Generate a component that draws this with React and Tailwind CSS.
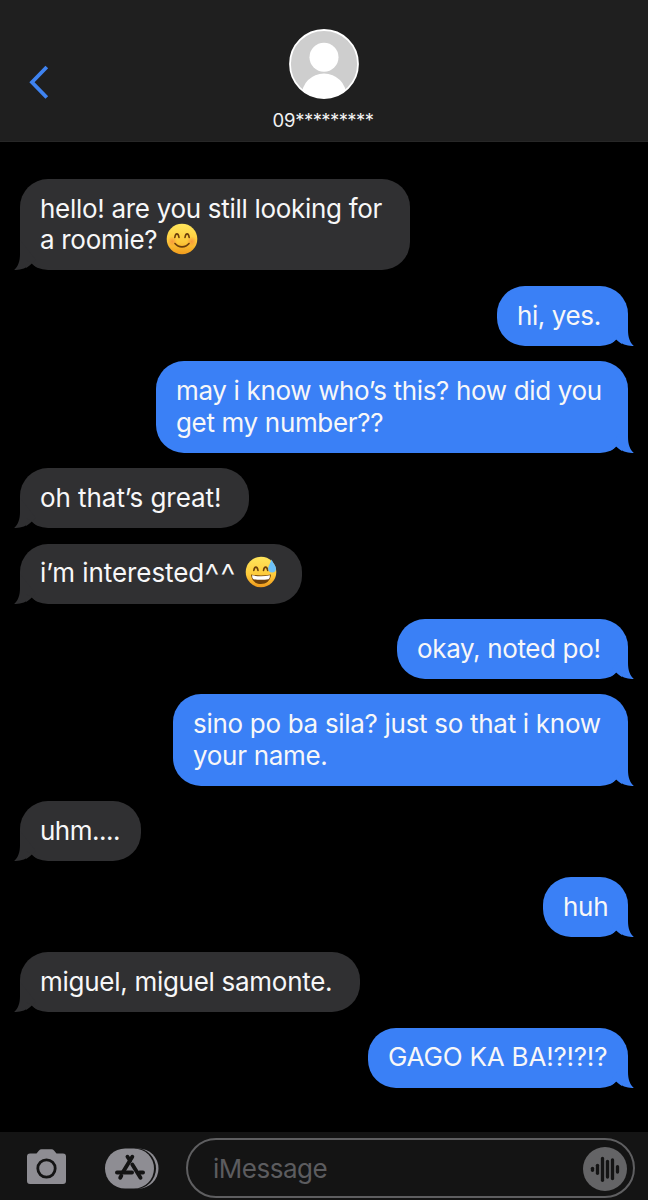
import React from 'react';

const messages = [
  { side: 'left', lines: ['hello! are you still looking for', 'a roomie?'], emoji: 'smile', size: 'w-[390px] tracking-[-0.3px]' },
  { side: 'right', lines: ['hi, yes.'], size: 'w-[131px] tracking-[-0.4px]' },
  { side: 'right', lines: ['may i know who’s this? how did you', 'get my number??'], size: 'w-[472px] tracking-[-0.34px]' },
  { side: 'left', lines: ['oh that’s great!'], size: 'w-[229px] tracking-[-0.06px]' },
  { side: 'left', lines: ['i’m interested'], carets: '^^', emoji: 'sweat', size: 'w-[282px] tracking-[-0.08px]' },
  { side: 'right', lines: ['okay, noted po!'], size: 'w-[231px] tracking-[-0.36px]' },
  { side: 'right', lines: ['sino po ba sila? just so that i know', 'your name.'], size: 'w-[455px] tracking-[-0.3px]' },
  { side: 'left', lines: ['uhm....'], size: 'w-[121px] tracking-[-0.5px]' },
  { side: 'right', lines: ['huh'], size: 'w-[85px] tracking-[-0.3px]' },
  { side: 'left', lines: ['miguel, miguel samonte.'], size: 'w-[340px] tracking-[-0.28px]' },
  { side: 'right', lines: ['GAGO KA BA!?!?!?'], size: 'w-[260px] tracking-[-0.2px]' },
];

const Emoji = ({ kind }) => (
  <svg viewBox="0 0 32 32" className="w-8 h-8 -mt-0.5 shrink-0" role="img" aria-label={kind}>
    <defs>
      <linearGradient id="face" x1="0" y1="0" x2="0" y2="1">
        <stop offset="0" stopColor="#ffe65c" />
        <stop offset="0.6" stopColor="#fdc93a" />
        <stop offset="1" stopColor="#f09a1c" />
      </linearGradient>
      <radialGradient id="blush">
        <stop offset="0" stopColor="#f4703a" stopOpacity="0.55" />
        <stop offset="1" stopColor="#f4703a" stopOpacity="0" />
      </radialGradient>
    </defs>
    <circle cx="16" cy="16" r="15.3" fill="url(#face)" />
    {kind === 'smile' ? (
      <>
        <circle cx="6.3" cy="18.5" r="5" fill="url(#blush)" />
        <circle cx="25.7" cy="18.5" r="5" fill="url(#blush)" />
        <g fill="none" stroke="#6b3f0c" strokeWidth="1.6" strokeLinecap="round">
          <path d="M8.8 14.5C9.5 9.7 12.3 9.7 13 14.5" />
          <path d="M19 14.5C19.7 9.7 22.5 9.7 23.2 14.5" />
          <path d="M9 20.5C12.5 25 19.5 25 23 20.5" />
        </g>
      </>
    ) : (
      <>
        <g fill="none" stroke="#6b3f0c" strokeWidth="1.6" strokeLinecap="round">
          <path d="M8.8 14.5C9.5 10 12.3 10 13 14.5" />
          <path d="M18.5 14.5C19.2 10 22 10 22.7 14.5" />
        </g>
        <path d="M6 18.5Q16 20.5 26 18.5C25.5 25 21 28 16 28S6.5 25 6 18.5Z" fill="#6b3f0c" />
        <path d="M7 19.3Q16 21 25 19.3Q25 22.6 23.5 23.2Q16 24.5 8.5 23.2Q7 22.6 7 19.3Z" fill="#fff" />
        <path d="M26.5 3.5C28 7 31 10 31 12.5A3.9 3.9 0 0 1 23.2 12.5C23.2 10 25.5 7 26.5 3.5Z" fill="#6cc0f7" />
      </>
    )}
  </svg>
);

const Tail = ({ side }) => (
  <svg
    viewBox="0 0 28 31"
    className={
      side === 'left'
        ? 'absolute -left-1.5 -bottom-px w-7 h-[31px] fill-[#303032]'
        : 'absolute -right-1.5 -bottom-px w-7 h-[31px] fill-[#3a80f6] -scale-x-100'
    }
  >
    <path d="M6 0V14C6 21 4.2 26.6 0.2 29.9C6 30.3 12 28.8 17.7 23.6L22 20Z" />
    {/* notch between the tail and the bubble's bottom edge */}
    <path d="M17.7 23.4C20.5 26 23 28.9 27.5 30.1V31H12V27.6C14 26.6 16 25.2 17.7 23.4Z" fill="#000" />
    <path d="M12 20V27.9C14 26.8 16 25.4 17.7 23.6Z" />
  </svg>
);

const Bubble = ({ side, lines, carets, emoji, size }) => (
  <div className={side === 'left' ? 'flex justify-start pl-5' : 'flex justify-end pr-5'}>
    <div
      className={`relative rounded-[28px] pl-5 pt-[13.8px] pb-[14.7px] text-[26px] leading-[31.5px] whitespace-nowrap text-[#f7f7f8] ${
        side === 'left' ? 'bg-[#303032]' : 'bg-[#3a80f6]'
      } ${size}`}
    >
      <Tail side={side} />
      {lines.map((line, i) => (
        <p key={line} className="relative flex items-center h-[31.5px]">
          <span>{line}</span>
          {carets && <span className="text-[34px] font-light tracking-[0.8px] mt-[5px]">{carets}</span>}
          {emoji && i === lines.length - 1 && (
            <span className="ml-[9px]">
              <Emoji kind={emoji} />
            </span>
          )}
        </p>
      ))}
    </div>
  </div>
);

const Header = () => (
  <header className="grid grid-cols-3 h-[142px] bg-[#1f1f1f] border-b border-[#272727]">
    <div className="pl-[29px] pt-[65px]">
      <svg viewBox="0 0 20 34" className="w-5 h-[34px]" fill="none" stroke="#3f83f0" strokeWidth="3.8">
        <path d="M17.8 2L3 17.3L17.8 32.5" />
      </svg>
    </div>
    <div className="flex flex-col items-center pt-[29px]">
      <svg viewBox="0 0 70 70" className="w-[70px] h-[70px]">
        <defs>
          <clipPath id="avatar">
            <circle cx="35" cy="35" r="34" />
          </clipPath>
        </defs>
        <circle cx="35" cy="35" r="34" fill="#cecece" />
        <g clipPath="url(#avatar)" fill="#fff">
          <circle cx="35" cy="28.3" r="14.5" />
          <ellipse cx="35" cy="67" rx="22.5" ry="22.5" />
        </g>
        <circle cx="35" cy="35" r="34" fill="none" stroke="#fff" strokeWidth="1.8" />
      </svg>
      <p className="mt-[9px] -ml-0.5 text-[18.5px] leading-6 tracking-[-0.6px] text-[#f2f2f2] whitespace-nowrap">
        <span className="tracking-[-0.2px]">09</span>*********
      </p>
    </div>
  </header>
);

const InputBar = () => (
  <footer className="flex items-start h-[68px] bg-[#141414] pl-[27px] pr-[14px]">
    <svg viewBox="0 0 39 36" className="w-[39px] h-9 mt-[17px]">
      <path
        d="M3 4.5H9.5L12 1.5Q13 0.3 14.5 0.3H24.5Q26 0.3 27 1.5L29.5 4.5H36Q39 4.5 39 7.5V32Q39 35 36 35H3Q0 35 0 32V7.5Q0 4.5 3 4.5Z"
        fill="#8e8d93"
      />
      <circle cx="19.5" cy="19.5" r="8.7" fill="none" stroke="#141414" strokeWidth="2.8" />
    </svg>
    <svg viewBox="0 0 54 42" className="w-[54px] h-[42px] mt-4 ml-[39px]">
      <rect x="7" y="0.5" width="46.5" height="40" rx="20" fill="#8e8d93" />
      <rect x="0" y="0" width="51" height="41" rx="20.5" fill="#141414" />
      <rect x="0" y="0.5" width="49" height="40" rx="20" fill="#8e8d93" />
      <g fill="none" stroke="#141414" strokeWidth="3.9" strokeLinecap="round">
        <path d="M22.5 8.7L25 12.5" />
        <path d="M27.3 8.7L18 24" />
        <path d="M27.3 16.5L35.5 29.8" />
        <path d="M12 24.5H27" />
        <path d="M34.5 24.5H38" />
        <path d="M16.3 27.8L15.2 29.8" />
      </g>
    </svg>
    <div className="flex items-center justify-between flex-1 h-[60px] mt-[6px] ml-[27px] -mr-px pl-[25px] pr-[6px] border-2 border-[#5f5f61] rounded-full">
      <span className="mt-0.5 text-[26px] leading-8 tracking-[-0.5px] text-[#5c5c5f]">iMessage</span>
      <svg viewBox="0 0 44 44" className="w-11 h-11 mt-px">
        <circle cx="22" cy="22" r="22" fill="#646466" />
        <g stroke="#141414" strokeWidth="3.3" strokeLinecap="round">
          <path d="M9.5 21.3V23.3" />
          <path d="M14.5 18.3V26.3" />
          <path d="M19.5 11.5V33.3" />
          <path d="M24.5 14.5V30" />
          <path d="M29.5 13V31.5" />
          <path d="M34.5 19.7V25" />
        </g>
      </svg>
    </div>
  </footer>
);

const App = () => {
  return (
    <div className="flex flex-col w-[648px] h-[1200px] overflow-hidden bg-black font-['Inter','Liberation_Sans',sans-serif]">
      <Header />
      <main className="flex flex-col flex-1 gap-[15.43px] pt-[37px]">
        {messages.map((message) => (
          <Bubble key={message.lines[0]} {...message} />
        ))}
      </main>
      <InputBar />
    </div>
  );
};

export default App;
